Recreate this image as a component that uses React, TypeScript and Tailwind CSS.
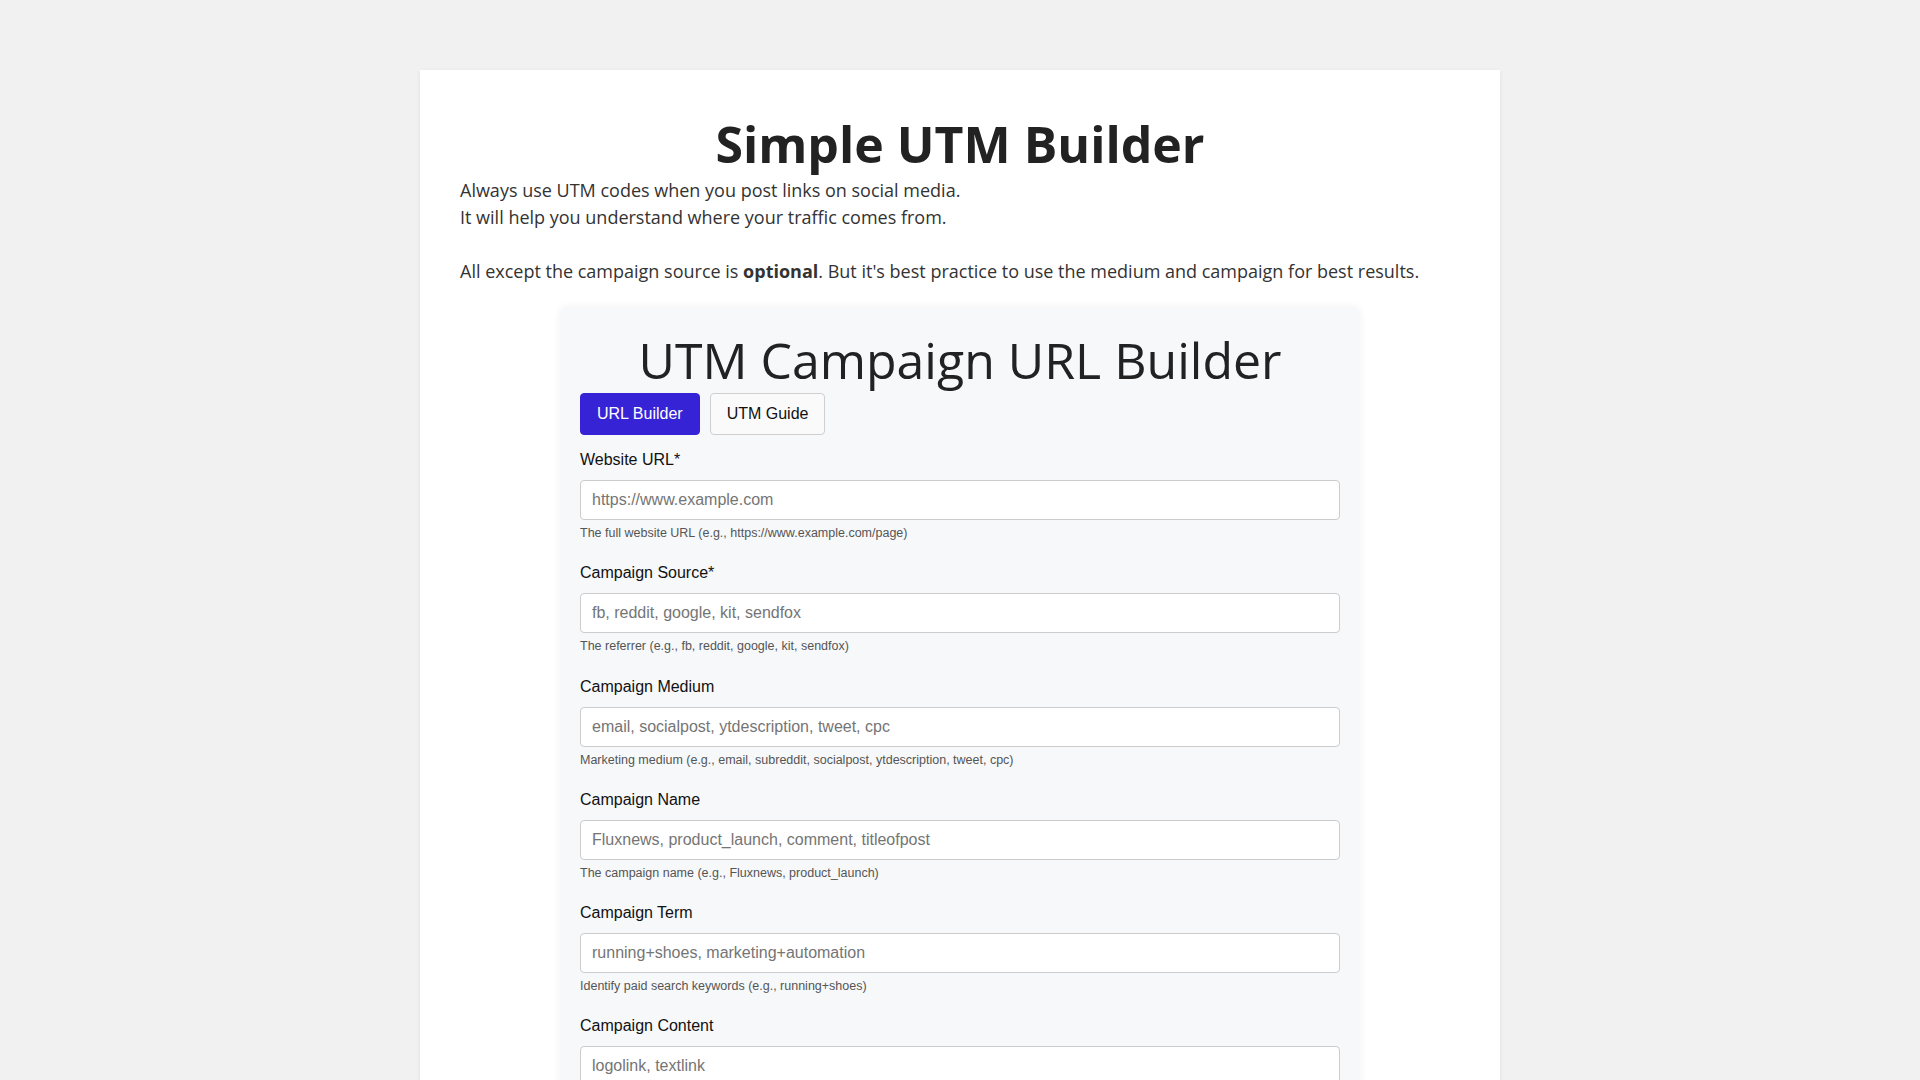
import React from "react";

type Field = { label: string; placeholder: string; help: string };

const fields: Field[] = [
  { label: "Website URL*", placeholder: "https://www.example.com", help: "The full website URL (e.g., https://www.example.com/page)" },
  { label: "Campaign Source*", placeholder: "fb, reddit, google, kit, sendfox", help: "The referrer (e.g., fb, reddit, google, kit, sendfox)" },
  { label: "Campaign Medium", placeholder: "email, socialpost, ytdescription, tweet, cpc", help: "Marketing medium (e.g., email, subreddit, socialpost, ytdescription, tweet, cpc)" },
  { label: "Campaign Name", placeholder: "Fluxnews, product_launch, comment, titleofpost", help: "The campaign name (e.g., Fluxnews, product_launch)" },
  { label: "Campaign Term", placeholder: "running+shoes, marketing+automation", help: "Identify paid search keywords (e.g., running+shoes)" },
  { label: "Campaign Content", placeholder: "logolink, textlink", help: "Use to differentiate ads or links (e.g., logolink, textlink)" },
];

export default function App() {
  return (
    <div className="min-h-screen bg-[#f1f1f1] pt-[70px] pb-10">
      <div className="mx-auto w-[1080px] bg-white shadow-[0_1px_4px_rgba(0,0,0,0.08)] px-10 pt-[41px] pb-10 text-[#333] [font-family:'Open_Sans',sans-serif]">
        <h1 className="text-center text-[50px] leading-[66px] font-bold text-[#222]">Simple UTM Builder</h1>
        <p className="text-[18px] leading-[27px]">
          Always use UTM codes when you post links on social media.
          <br />
          It will help you understand where your traffic comes from.
          <br />
          <br />
          All except the campaign source is <strong className="font-bold">optional</strong>. But it's best practice to use the medium and campaign for best results.
        </p>

        <div className="mx-auto mt-[22px] w-[800px] rounded-lg bg-[#f6f8fa] p-5 shadow-[0_0_8px_rgba(0,0,0,0.06)]">
          <h2 className="text-center text-[50px] leading-[66px] font-normal text-[#222]">UTM Campaign URL Builder</h2>
          <div className="flex gap-[10px] [font-family:'Liberation_Sans',Arial,sans-serif]">
            <button className="h-[42px] rounded-[4px] border border-[#3723d6] bg-[#3723d6] px-4 text-[16px] text-white">URL Builder</button>
            <button className="h-[42px] rounded-[4px] border border-[#cfcfcf] bg-[#fafafa] px-4 text-[16px] text-[#111]">UTM Guide</button>
          </div>
          <form className="mt-[16px] [font-family:'Liberation_Sans',Arial,sans-serif]">
            {fields.map((f) => (
              <div key={f.label} className="mb-[23.3px]">
                <label className="mb-[11px] block text-[16px] leading-[18px] text-[#111]">{f.label}</label>
                <input
                  type="text"
                  placeholder={f.placeholder}
                  className="block h-[40px] w-full rounded-[4px] border border-[#cccccc] bg-white px-[11px] text-[16px] text-[#222] placeholder:text-[#757575] outline-none"
                />
                <div className="mt-[5px] text-[12.5px] leading-[16px] text-[#555]">{f.help}</div>
              </div>
            ))}
            <button type="button" className="h-[42px] w-full rounded-[4px] bg-[#3723d6] text-[16px] text-white">Generate URL</button>
          </form>
        </div>
      </div>
    </div>
  );
}
